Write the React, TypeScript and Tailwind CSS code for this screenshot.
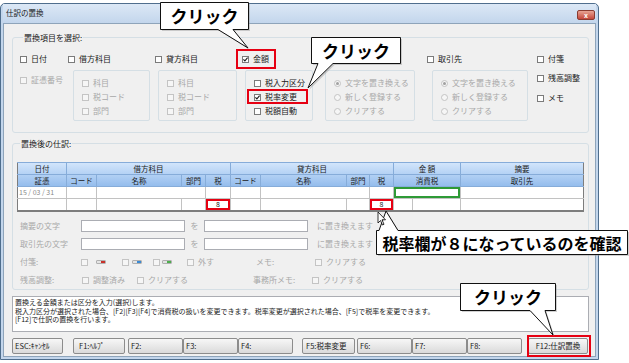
import React from "react";

function Box({ checked, disabled }: { checked?: boolean; disabled?: boolean }) {
  return (
    <span
      className={
        disabled
          ? "flex h-[7px] w-[7px] shrink-0 items-center justify-center border border-[#c4c4c4] bg-[#f6f6f6]"
          : "flex h-[7px] w-[7px] shrink-0 items-center justify-center border border-[#7b7b7b] bg-white"
      }
    >
      {checked && (
        <svg width="5" height="5" viewBox="0 0 5 5">
          <path d="M0.4 2.4 L1.9 3.9 L4.6 0.7" fill="none" stroke="#1d1d1d" strokeWidth="1.1" />
        </svg>
      )}
    </span>
  );
}

function Cb({
  label,
  checked,
  disabled,
  className = "",
}: {
  label: string;
  checked?: boolean;
  disabled?: boolean;
  className?: string;
}) {
  return (
    <div
      className={`flex items-center gap-[4px] ${disabled ? "text-[#a8a8a8]" : "text-[#1a1a1a]"} ${className}`}
    >
      <Box checked={checked} disabled={disabled} />
      <span className="whitespace-nowrap">{label}</span>
    </div>
  );
}

function Radio({ label, selected }: { label: string; selected?: boolean }) {
  return (
    <div className="flex h-[14px] items-center gap-[4px] text-[#a8a8a8]">
      <span className="flex h-[7px] w-[7px] shrink-0 items-center justify-center rounded-full border border-[#c4c4c4] bg-[#f6f6f6]">
        {selected && <span className="h-[3px] w-[3px] rounded-full bg-[#a0a0a0]" />}
      </span>
      <span className="whitespace-nowrap">{label}</span>
    </div>
  );
}

function Tag({ color }: { color: string }) {
  return (
    <span className="flex h-[4px] w-[10px] justify-end overflow-hidden rounded-[1px] border border-[#b0b0b0] bg-[#e4e4e4]">
      <span className="h-full w-[4px]" style={{ backgroundColor: color }} />
    </span>
  );
}

function Input() {
  return <span className="h-[12px] w-[104px] shrink-0 border border-[#abadb3] bg-white" />;
}

const cols = [49, 30, 85, 24, 25, 30, 86, 23, 24, 19, 48, 123];

const th = "border-r border-b border-[#86acd9] font-normal text-[#1a1a1a]";
const td = "border-r border-b border-[#c2c2c2]";

const buttons = [
  { label: "ESC:ｷｬﾝｾﾙ", cls: "ml-0 w-[51px] pl-[2px]" },
  { label: "F1:ﾍﾙﾌﾟ", cls: "ml-[10px] w-[52px] pl-[5px]" },
  { label: "F2:", cls: "ml-[3px] w-[55px] pl-[2px]" },
  { label: "F3:", cls: "ml-0 w-[55px] pl-[2px]" },
  { label: "F4:", cls: "ml-0 w-[55px] pl-[2px]" },
  { label: "F5:税率変更", cls: "ml-[9px] w-[53px] pl-[3px]" },
  { label: "F6:", cls: "ml-[2px] w-[55px] pl-[2px]" },
  { label: "F7:", cls: "ml-0 w-[55px] pl-[2px]" },
  { label: "F8:", cls: "ml-0 w-[55px] pl-[2px]" },
  { label: "F12:仕訳置換", cls: "ml-[6px] w-[60px] text-center" },
];

export default function App() {
  return (
    <div className="relative h-[363px] w-[629px] overflow-hidden bg-white font-['Noto_Sans_CJK_JP',sans-serif] text-[8px] leading-[12px] text-[#1a1a1a]">
      {/* window */}
      <div className="mt-[3px] flex h-[357px] w-[599px] flex-col rounded-t-[5px] border border-[#4f6e8d] bg-[#c3d6ec] px-[2px] pb-[2px]">
        <div className="flex h-[19px] items-start justify-between bg-gradient-to-b from-[#dce8f6] to-[#c3d6ec] pr-[1px]">
          <span className="pl-[3px] pt-[4px] text-[7.5px] leading-[10px]">仕訳の置換</span>
          <span className="mt-[6px] flex h-[10px] w-[18px] items-center justify-center rounded-[2px] border border-[#8a3b30] bg-gradient-to-b from-[#e7a394] to-[#c4453a] text-[7px] font-bold leading-none text-white">
            x
          </span>
        </div>

        <div className="flex flex-1 flex-col border border-[#8ea4ba] bg-[#f0f0f0] pl-[8px] pr-[6px] pt-[8px]">
          {/* group 1 */}
          <fieldset className="rounded-[3px] border border-[#d5dfe5] px-[7px] pb-[11px] pt-[10px]">
            <legend className="ml-[3px] px-[1px] leading-[11px]">置換項目を選択:</legend>
            <div className="flex">
              <div className="w-[48px]">
                <Cb label="日付" className="h-[12px]" />
                <Cb label="証憑番号" disabled className="mt-[9px] h-[12px]" />
              </div>
              <div className="w-[87px]">
                <Cb label="借方科目" className="h-[12px]" />
                <div className="ml-[5px] mt-[5px] h-[51px] w-[77px] rounded-[2px] border border-[#d5dfe5] pl-[8px] pt-[5px]">
                  <Cb label="科目" disabled className="h-[14px]" />
                  <Cb label="税コード" disabled className="h-[14px]" />
                  <Cb label="部門" disabled className="h-[14px]" />
                </div>
              </div>
              <div className="w-[87px]">
                <Cb label="貸方科目" className="h-[12px]" />
                <div className="ml-[3px] mt-[5px] h-[51px] w-[79px] rounded-[2px] border border-[#d5dfe5] pl-[8px] pt-[5px]">
                  <Cb label="科目" disabled className="h-[14px]" />
                  <Cb label="税コード" disabled className="h-[14px]" />
                  <Cb label="部門" disabled className="h-[14px]" />
                </div>
              </div>
              <div className="w-[80px]">
                <div className="relative h-[12px]">
                  <Cb label="金額" checked className="h-[12px]" />
                  <span className="absolute left-[-6px] top-[-4px] h-[20px] w-[40px] border-2 border-[#e60012]" />
                </div>
                <div className="ml-[3px] mt-[5px] h-[51px] w-[68px] rounded-[2px] border border-[#d5dfe5] pl-[8px] pt-[5px]">
                  <Cb label="税入力区分" className="h-[14px]" />
                  <div className="relative">
                    <Cb label="税率変更" checked className="h-[14px]" />
                    <span className="absolute left-[-7px] top-[-1px] h-[15px] w-[61px] border-2 border-[#e60012]" />
                  </div>
                  <Cb label="税額自動" className="h-[14px]" />
                </div>
              </div>
              <div className="w-[105px]">
                {/* header of this column lies under the callout */}
                <div className="h-[12px]" />
                <div className="ml-[3px] mt-[5px] h-[51px] w-[90px] rounded-[2px] border border-[#d5dfe5] pl-[8px] pt-[5px]">
                  <Radio label="文字を置き換える" selected />
                  <Radio label="新しく登録する" />
                  <Radio label="クリアする" />
                </div>
              </div>
              <div className="w-[110px]">
                <Cb label="取引先" className="h-[12px]" />
                <div className="ml-[5px] mt-[5px] h-[51px] w-[96px] rounded-[2px] border border-[#d5dfe5] pl-[8px] pt-[5px]">
                  <Radio label="文字を置き換える" selected />
                  <Radio label="新しく登録する" />
                  <Radio label="クリアする" />
                </div>
              </div>
              <div>
                <Cb label="付箋" className="h-[12px]" />
                <Cb label="残高調整" className="mt-[7px] h-[12px]" />
                <Cb label="メモ" className="mt-[8px] h-[12px]" />
              </div>
            </div>
          </fieldset>

          {/* group 2 */}
          <fieldset className="mt-[5px] rounded-[3px] border border-[#d5dfe5] px-[4px] pb-[3px] pt-[13px]">
            <legend className="ml-[3px] px-[1px] leading-[11px]">置換後の仕訳:</legend>
            <table className="w-[566px] table-fixed border-collapse border-x border-b-2 border-[#7d7d7d] text-[7.5px] leading-[11px]">
              <colgroup>
                {cols.map((w, i) => (
                  <col key={i} style={{ width: w }} />
                ))}
              </colgroup>
              <thead className="bg-gradient-to-b from-[#d2e5fb] to-[#92bbec]">
                <tr className="h-[12px] border-t border-[#86acd9]">
                  <th className={th}>日付</th>
                  <th className={th} colSpan={4}>借方科目</th>
                  <th className={th} colSpan={4}>貸方科目</th>
                  <th className={th} colSpan={2}>金 額</th>
                  <th className="border-b border-[#86acd9] font-normal">摘要</th>
                </tr>
                <tr className="h-[12px]">
                  <th className={th}>証憑</th>
                  <th className={th}>コード</th>
                  <th className={th}>名称</th>
                  <th className={th}>部門</th>
                  <th className={th}>税</th>
                  <th className={th}>コード</th>
                  <th className={th}>名称</th>
                  <th className={th}>部門</th>
                  <th className={th}>税</th>
                  <th className={th} colSpan={2}>消費税</th>
                  <th className="border-b border-[#86acd9] font-normal">取引先</th>
                </tr>
              </thead>
              <tbody className="bg-white">
                <tr className="h-[12px]">
                  <td className={`${td} pl-[1px] text-[7px] text-[#8a8a8a]`}>15 / 03 / 31</td>
                  <td className={td} />
                  <td className={td} colSpan={2} />
                  <td className={td} />
                  <td className={td} />
                  <td className={td} colSpan={2} />
                  <td className={td} />
                  <td className={`${td} shadow-[inset_0_0_0_2px_#2e9a36]`} colSpan={2} />
                  <td className="border-b border-[#c2c2c2]" />
                </tr>
                <tr className="h-[12px]">
                  <td className={td} />
                  <td className={td} />
                  <td className={td} />
                  <td className={td} />
                  <td className={`${td} text-center text-[7px] shadow-[inset_0_0_0_2px_#e60012]`}>8</td>
                  <td className={td} />
                  <td className={td} />
                  <td className={td} />
                  <td className={`${td} text-center text-[7px] shadow-[inset_0_0_0_2px_#e60012]`}>8</td>
                  <td className={td} />
                  <td className={td} />
                  <td className="border-b border-[#c2c2c2]" />
                </tr>
              </tbody>
            </table>

            <div className="mt-[8px] flex h-[12px] items-center text-[#a8a8a8]">
              <span className="w-[64px] pl-[3px]">摘要の文字</span>
              <Input />
              <span className="w-[19px] text-center">を</span>
              <Input />
              <span className="ml-[9px]">に置き換えます</span>
            </div>
            <div className="mt-[6px] flex h-[12px] items-center text-[#a8a8a8]">
              <span className="w-[64px] pl-[3px]">取引先の文字</span>
              <Input />
              <span className="w-[19px] text-center">を</span>
              <Input />
              <span className="ml-[9px]">に置き換えます</span>
            </div>
            <div className="mt-[6px] flex h-[12px] items-center text-[#a8a8a8]">
              <span className="w-[64px] pl-[3px]">付箋:</span>
              <Box disabled />
              <span className="ml-[8px]">
                <Tag color="#c8302a" />
              </span>
              <span className="ml-[16px]">
                <Box disabled />
              </span>
              <span className="ml-[3px]">
                <Tag color="#3a8ad4" />
              </span>
              <span className="ml-[11px]">
                <Box disabled />
              </span>
              <span className="ml-[2px]">
                <Tag color="#4cae4c" />
              </span>
              <Cb label="外す" disabled className="ml-[15px] text-[#a8a8a8]" />
              <span className="ml-[42px] w-[59px]">メモ:</span>
              <Cb label="クリアする" disabled />
            </div>
            <div className="mt-[6px] flex h-[12px] items-center text-[#a8a8a8]">
              <span className="w-[65px] pl-[3px]">残高調整:</span>
              <Cb label="調整済み" disabled className="w-[55px]" />
              <Cb label="クリアする" disabled className="w-[116px]" />
              <span className="w-[59px]">事務所メモ:</span>
              <Cb label="クリアする" disabled />
            </div>
          </fieldset>

          {/* message */}
          <div className="mt-[6px] h-[36px] border border-[#abadb3] bg-white px-[2px] pt-[1px] text-[7px] leading-[8.5px]">
            <p>置換える金額または区分を入力(選択)します。</p>
            <p>
              税入力区分が選択された場合、[F2][F3][F4]で消費税の扱いを変更できます。税率変更が選択された場合、[F5]で税率を変更できます。
            </p>
            <p>[F12]で仕訳の置換を行います。</p>
          </div>

          {/* function keys */}
          <div className="mt-[6px] flex h-[16px]">
            {buttons.map((b) => (
              <div
                key={b.label}
                className={`relative h-[16px] shrink-0 whitespace-nowrap rounded-[2px] border border-[#8c8c8c] bg-gradient-to-b from-[#f7f7f7] to-[#dadada] text-[7.5px] leading-[14px] ${b.cls}`}
              >
                {b.label}
                {b.label === "F12:仕訳置換" && (
                  <span className="absolute left-[-2px] top-[-4px] h-[22px] w-[64px] border-2 border-[#e60012]" />
                )}
              </div>
            ))}
          </div>
        </div>
      </div>

      {/* callout annotations */}
      <svg className="pointer-events-none absolute left-0 top-0" width="629" height="363" viewBox="0 0 629 363">
        <g fill="#9a9a9a" opacity="0.45" transform="translate(1.5 1.5)">
          <path d="M160.5 2.5H248.5V29.5H233L248 48L218 29.5H160.5Z" />
          <path d="M311.5 37.5H400.5V63.5H333L308 88L318 63.5H311.5Z" />
          <path d="M376.5 230.5H379L386 211L398 230.5H627.5V254.5H376.5Z" />
          <path d="M460.5 283.5H555.5V310.5H545L553 335L530 310.5H460.5Z" />
        </g>
        <g fill="#fff" stroke="#111" strokeWidth="1">
          <path d="M160.5 2.5H248.5V29.5H233L248 48L218 29.5H160.5Z" />
          <path d="M311.5 37.5H400.5V63.5H333L308 88L318 63.5H311.5Z" />
          <path d="M376.5 230.5H379L386 211L398 230.5H627.5V254.5H376.5Z" />
          <path d="M460.5 283.5H555.5V310.5H545L553 335L530 310.5H460.5Z" />
        </g>
        <path d="M378 212V223L380.5 220.5L382.5 225L384 224.3L382 219.8H385.5Z" fill="#fff" stroke="#000" strokeWidth="0.8" />
      </svg>
      <div className="absolute left-[160px] top-[2px] flex h-[28px] w-[89px] items-center justify-center text-[17px] font-bold text-black">
        クリック
      </div>
      <div className="absolute left-[311px] top-[37px] flex h-[27px] w-[90px] items-center justify-center text-[17px] font-bold text-black">
        クリック
      </div>
      <div className="absolute left-[376px] top-[230px] flex h-[25px] w-[252px] items-center justify-center text-[16px] font-bold text-black">
        税率欄が８になっているのを確認
      </div>
      <div className="absolute left-[460px] top-[283px] flex h-[28px] w-[96px] items-center justify-center text-[17px] font-bold text-black">
        クリック
      </div>
    </div>
  );
}
